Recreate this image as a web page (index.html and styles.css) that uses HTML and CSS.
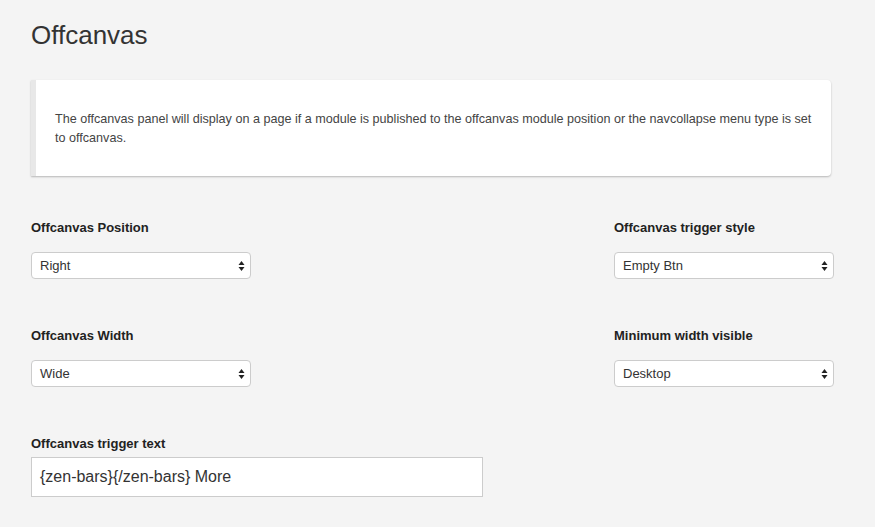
FILE: index.html
```html
<!DOCTYPE html>
<html>
<head>
<meta charset="utf-8">
<link rel="stylesheet" href="styles.css">
</head>
<body>
<div class="page">
  <h1 class="title">Offcanvas</h1>
  <div class="note">
    <p>The offcanvas panel will display on a page if a module is published to the offcanvas module position or the navcollapse menu type is set to offcanvas.</p>
  </div>
  <div class="grid">
    <div class="field">
      <label class="label">Offcanvas Position</label>
      <div class="select"><span>Right</span><svg class="arrows" width="7" height="12" viewBox="0 0 7 12"><path d="M3.5 1 L6.5 5 H0.5 Z M3.5 11 L6.5 7 H0.5 Z" fill="#222"/></svg></div>
    </div>
    <div class="field">
      <label class="label">Offcanvas trigger style</label>
      <div class="select"><span>Empty Btn</span><svg class="arrows" width="7" height="12" viewBox="0 0 7 12"><path d="M3.5 1 L6.5 5 H0.5 Z M3.5 11 L6.5 7 H0.5 Z" fill="#222"/></svg></div>
    </div>
    <div class="field">
      <label class="label">Offcanvas Width</label>
      <div class="select"><span>Wide</span><svg class="arrows" width="7" height="12" viewBox="0 0 7 12"><path d="M3.5 1 L6.5 5 H0.5 Z M3.5 11 L6.5 7 H0.5 Z" fill="#222"/></svg></div>
    </div>
    <div class="field">
      <label class="label">Minimum width visible</label>
      <div class="select"><span>Desktop</span><svg class="arrows" width="7" height="12" viewBox="0 0 7 12"><path d="M3.5 1 L6.5 5 H0.5 Z M3.5 11 L6.5 7 H0.5 Z" fill="#222"/></svg></div>
    </div>
    <div class="field wide">
      <label class="label">Offcanvas trigger text</label>
      <div class="text-input">{zen-bars}{/zen-bars} More</div>
    </div>
  </div>
</div>
</body>
</html>
```
FILE: styles.css
```css
html, body {
  margin: 0;
  padding: 0;
  background: #f4f4f4;
}
body {
  font-family: "Liberation Sans", Arial, sans-serif;
  color: #333;
}
.page {
  padding: 20px 0 0 31px;
  width: 803px;
}
.title {
  margin: 0;
  font-size: 26px;
  font-weight: normal;
  line-height: 30px;
  color: #333;
}
.note {
  margin-top: 30px;
  width: 800px;
  height: 96px;
  box-sizing: border-box;
  background: #fff;
  border-left: 5px solid #e8e8e8;
  border-radius: 0 4px 4px 0;
  box-shadow: 0 1px 2px rgba(0,0,0,0.25);
  padding: 30px 8px 0 19px;
}
.note p {
  margin: 0;
  font-size: 12.6px;
  line-height: 19px;
  color: #444;
}
.grid {
  display: grid;
  grid-template-columns: 583px 220px;
  row-gap: 49px;
  margin-top: 44px;
}
.field {
  display: flex;
  flex-direction: column;
}
.field.wide {
  grid-column: 1 / 3;
  margin-top: 0;
}
.label {
  font-size: 13px;
  font-weight: bold;
  color: #222;
  line-height: 16px;
  margin-bottom: 16px;
}
.field.wide .label {
  margin-bottom: 5px;
}
.select {
  position: relative;
  width: 220px;
  height: 27px;
  box-sizing: border-box;
  background: #fff;
  border: 1px solid #ccc;
  border-radius: 4px;
  display: flex;
  align-items: center;
  padding-left: 8px;
  font-size: 13px;
  color: #333;
}
.arrows {
  position: absolute;
  right: 5px;
  top: 7px;
}
.text-input {
  width: 452px;
  height: 40px;
  box-sizing: border-box;
  background: #fff;
  border: 1px solid #ccc;
  display: flex;
  align-items: center;
  padding-left: 8px;
  font-size: 16px;
  color: #333;
}
```
